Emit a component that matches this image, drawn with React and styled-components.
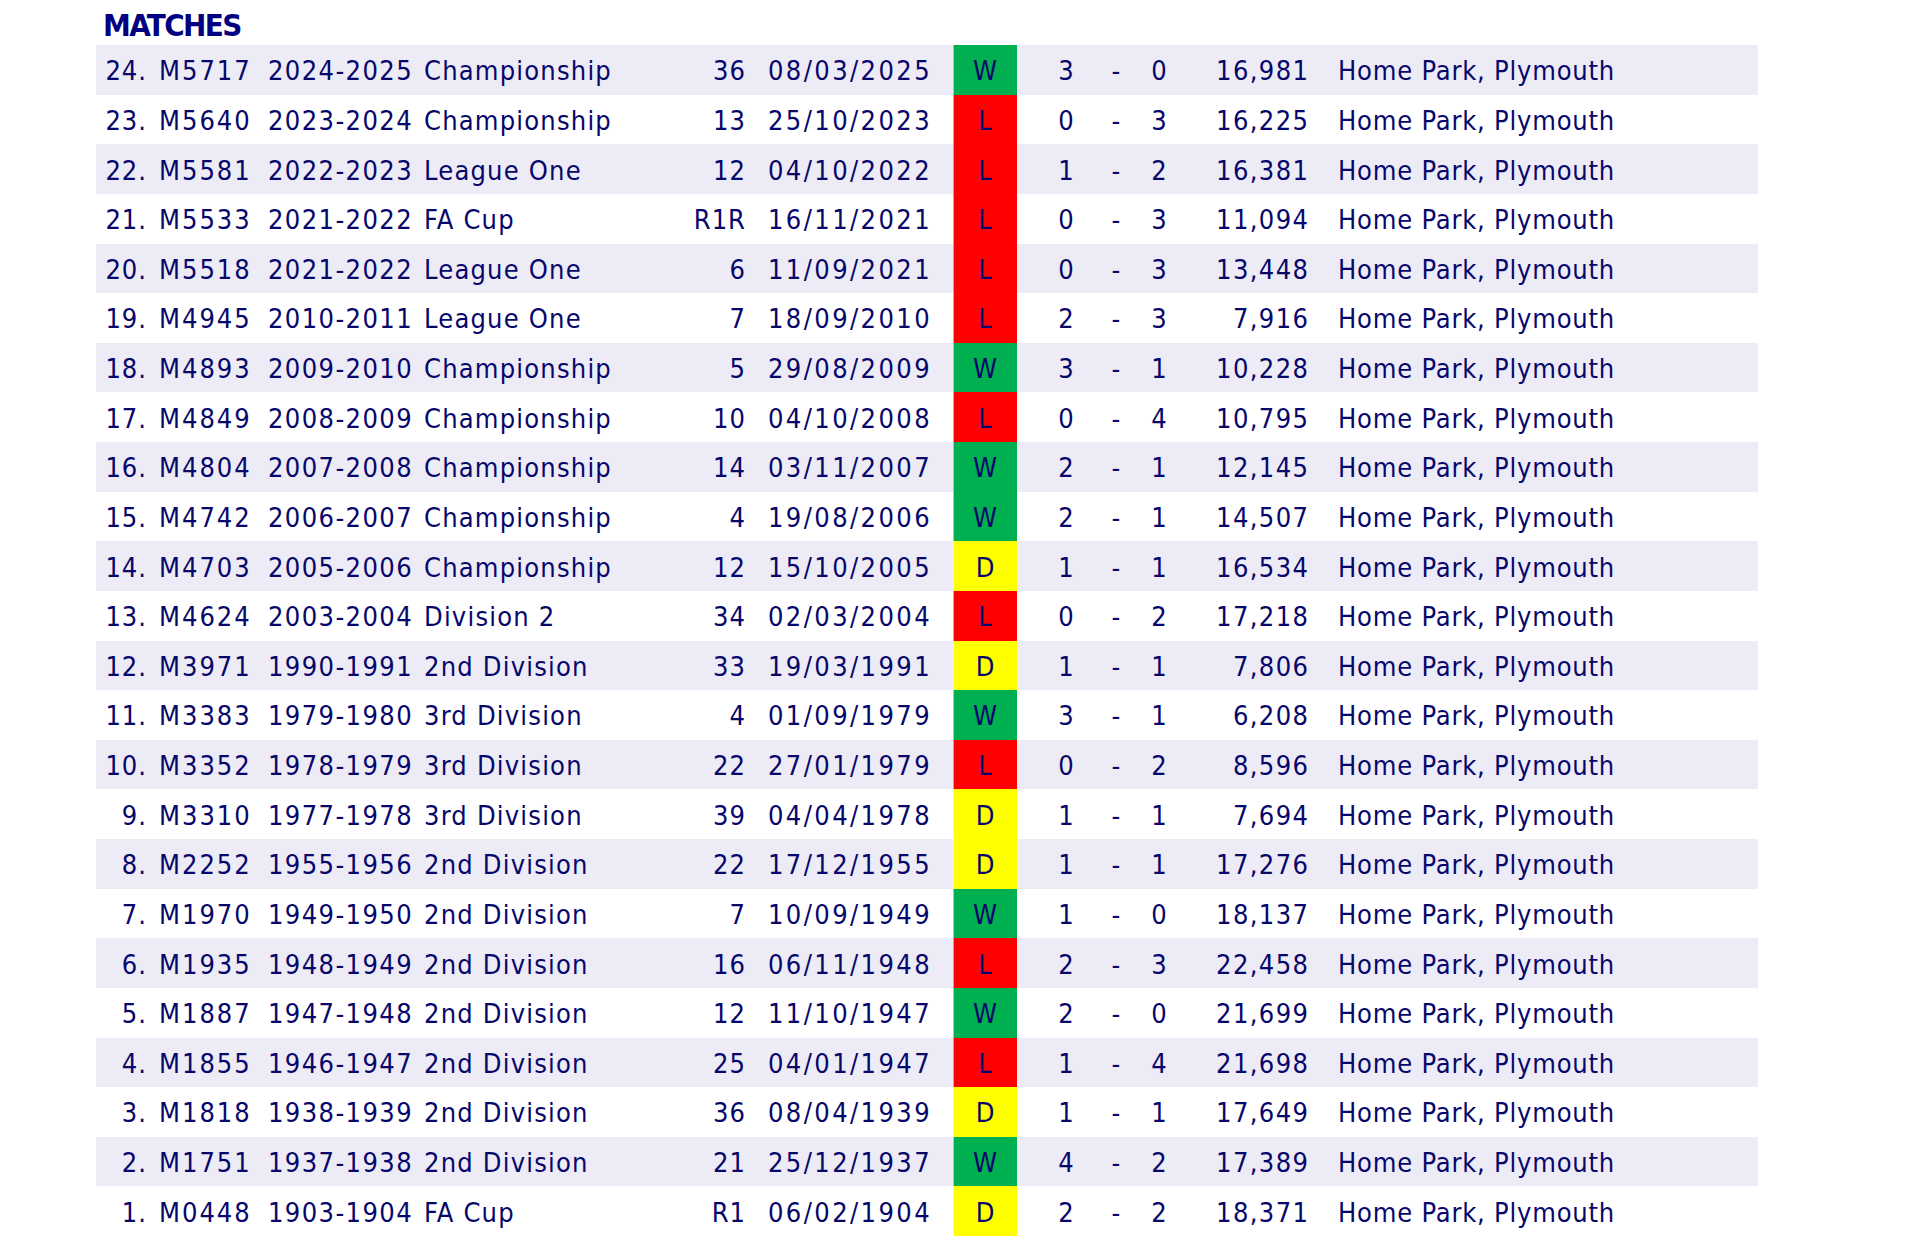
import React from "react";
import styled, { createGlobalStyle } from "styled-components";

const GlobalStyle = createGlobalStyle`
  html, body { margin: 0; padding: 0; background: #ffffff; }
  body { font-family: "DejaVu Sans Condensed", "DejaVu Sans", "Liberation Sans", sans-serif; }
`;

const ROW_H = 49.64;

const Page = styled.div`
  padding-left: 96px;
  width: 1662px;
`;

const Title = styled.h2`
  margin: 0;
  padding: 6px 0 0 7px;
  height: 39px;
  line-height: 39px;
  font-size: 31px;
  letter-spacing: -1.6px;
  font-weight: 700;
  color: #000080;
  font-family: "DejaVu Sans Condensed", "DejaVu Sans", sans-serif;
`;

const Table = styled.div`
  display: flex;
  flex-direction: column;
`;

const Row = styled.div`
  display: grid;
  grid-template-columns: 54px 110px 156px 264px 73px 200px 64px 74px 50px 36px 145px 436px;
  height: ${ROW_H}px;
  box-sizing: border-box;
  padding-top: 2px;
  background: ${(p) => (p.$stripe ? "#edebf6" : "#ffffff")};
  color: #07076b;
  font-size: 27px;
  font-family: "DejaVu Sans Condensed", "DejaVu Sans", sans-serif;
`;

const Cell = styled.div`
  display: flex;
  align-items: center;
  justify-content: ${(p) => (p.$align === "right" ? "flex-end" : p.$align === "center" ? "center" : "flex-start")};
  padding-left: ${(p) => p.$pl || 0}px;
  padding-right: ${(p) => p.$pr || 0}px;
  letter-spacing: ${(p) => p.$ls || 0}px;
  white-space: nowrap;
  overflow: visible;
  min-width: 0;
`;

const RESULT_BG = { W: "#00b050", L: "#ff0000", D: "#ffff00" };

const ResultCell = styled.div`
  display: flex;
  align-items: center;
  justify-content: center;
  margin-top: -2px;
  background: ${(p) => RESULT_BG[p.$r]};
  box-shadow: inset 1px 0 0 rgba(255, 255, 255, 0.55);
  padding-top: 2px;
`;

const data = [
  [24, "M5717", "2024-2025", "Championship", "36", "08/03/2025", "W", 3, 0, "16,981"],
  [23, "M5640", "2023-2024", "Championship", "13", "25/10/2023", "L", 0, 3, "16,225"],
  [22, "M5581", "2022-2023", "League One", "12", "04/10/2022", "L", 1, 2, "16,381"],
  [21, "M5533", "2021-2022", "FA Cup", "R1R", "16/11/2021", "L", 0, 3, "11,094"],
  [20, "M5518", "2021-2022", "League One", "6", "11/09/2021", "L", 0, 3, "13,448"],
  [19, "M4945", "2010-2011", "League One", "7", "18/09/2010", "L", 2, 3, "7,916"],
  [18, "M4893", "2009-2010", "Championship", "5", "29/08/2009", "W", 3, 1, "10,228"],
  [17, "M4849", "2008-2009", "Championship", "10", "04/10/2008", "L", 0, 4, "10,795"],
  [16, "M4804", "2007-2008", "Championship", "14", "03/11/2007", "W", 2, 1, "12,145"],
  [15, "M4742", "2006-2007", "Championship", "4", "19/08/2006", "W", 2, 1, "14,507"],
  [14, "M4703", "2005-2006", "Championship", "12", "15/10/2005", "D", 1, 1, "16,534"],
  [13, "M4624", "2003-2004", "Division 2", "34", "02/03/2004", "L", 0, 2, "17,218"],
  [12, "M3971", "1990-1991", "2nd Division", "33", "19/03/1991", "D", 1, 1, "7,806"],
  [11, "M3383", "1979-1980", "3rd Division", "4", "01/09/1979", "W", 3, 1, "6,208"],
  [10, "M3352", "1978-1979", "3rd Division", "22", "27/01/1979", "L", 0, 2, "8,596"],
  [9, "M3310", "1977-1978", "3rd Division", "39", "04/04/1978", "D", 1, 1, "7,694"],
  [8, "M2252", "1955-1956", "2nd Division", "22", "17/12/1955", "D", 1, 1, "17,276"],
  [7, "M1970", "1949-1950", "2nd Division", "7", "10/09/1949", "W", 1, 0, "18,137"],
  [6, "M1935", "1948-1949", "2nd Division", "16", "06/11/1948", "L", 2, 3, "22,458"],
  [5, "M1887", "1947-1948", "2nd Division", "12", "11/10/1947", "W", 2, 0, "21,699"],
  [4, "M1855", "1946-1947", "2nd Division", "25", "04/01/1947", "L", 1, 4, "21,698"],
  [3, "M1818", "1938-1939", "2nd Division", "36", "08/04/1939", "D", 1, 1, "17,649"],
  [2, "M1751", "1937-1938", "2nd Division", "21", "25/12/1937", "W", 4, 2, "17,389"],
  [1, "M0448", "1903-1904", "FA Cup", "R1", "06/02/1904", "D", 2, 2, "18,371"],
];

export default function App() {
  return (
    <>
      <GlobalStyle />
      <Page>
        <Title>MATCHES</Title>
        <Table>
          {data.map((r, i) => (
            <Row key={r[0]} $stripe={i % 2 === 0}>
              <Cell $align="right" $pr={3} $ls={1}>{r[0]}.</Cell>
              <Cell $pl={9} $ls={2}>{r[1]}</Cell>
              <Cell $pl={8} $ls={1.4}>{r[2]}</Cell>
              <Cell $pl={8} $ls={1.2}>{r[3]}</Cell>
              <Cell $align="right" $pr={7} $ls={1}>{r[4]}</Cell>
              <Cell $pl={15} $ls={2.4}>{r[5]}</Cell>
              <ResultCell $r={r[6]}>{r[6]}</ResultCell>
              <Cell $align="center" $pl={24}>{r[7]}</Cell>
              <Cell $align="center">-</Cell>
              <Cell $align="center">{r[8]}</Cell>
              <Cell $align="right" $pr={12.6} $ls={1.4}>{r[9]}</Cell>
              <Cell $pl={16} $ls={0.8}>Home Park, Plymouth</Cell>
            </Row>
          ))}
        </Table>
      </Page>
    </>
  );
}
